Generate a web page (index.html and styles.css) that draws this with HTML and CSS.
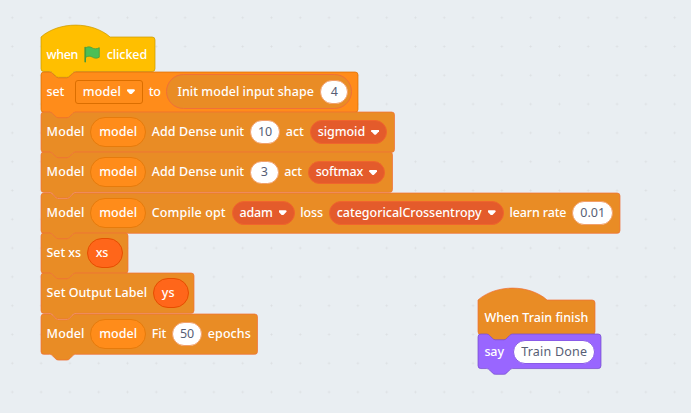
FILE: index.html
```html
<!DOCTYPE html>
<html lang="en">
<head>
<meta charset="utf-8">
<title>Blocks workspace</title>
<link rel="stylesheet" href="styles.css">
</head>
<body>
<main class="workspace">
  <section class="stack stack-main">
    <div class="block hat events" data-width="114">
      <span class="label" data-w="31.5">when</span>
      <svg class="flag" viewBox="0 0 17 17"><path d="M1.200 1.500V15.700" stroke="#45993d" stroke-width="1.600" stroke-linecap="round"/><path d="M1.600 1.800C4 .3 6.300 .7 8.300 1.900S12.600 3.100 15.300 1.700V11.200C12.600 12.800 10.300 12.300 8.300 11.100S4 9.800 1.600 11.400Z" fill="#4cbf56" stroke="#45993d" stroke-width=".7"/></svg>
      <span class="label" data-w="40.5">clicked</span>
    </div>
    <div class="block data" data-width="317">
      <span class="label set" data-w="17.500">set</span>
      <span class="menu square"><span class="label" data-w="38">model</span><i class="arrow"></i></span>
      <span class="label" data-w="12">to</span>
      <span class="reporter"><span class="label" data-w="136.500">Init model input shape</span><span class="value"><span class="label" data-w="7">4</span></span></span>
    </div>
    <div class="block learn" data-width="353.500">
      <span class="label" data-w="38">Model</span><span class="variable"><span class="label" data-w="38">model</span></span>
      <span class="label" data-w="92.500">Add Dense unit</span><span class="value"><span class="label" data-w="14">10</span></span>
      <span class="label" data-w="18">act</span><span class="menu"><span class="label" data-w="47.500">sigmoid</span><i class="arrow"></i></span>
    </div>
    <div class="block learn" data-width="351.500">
      <span class="label" data-w="38">Model</span><span class="variable"><span class="label" data-w="38">model</span></span>
      <span class="label" data-w="92.500">Add Dense unit</span><span class="value"><span class="label" data-w="7">3</span></span>
      <span class="label" data-w="17.500">act</span><span class="menu"><span class="label" data-w="47.500">softmax</span><i class="arrow"></i></span>
    </div>
    <div class="block learn" data-width="579">
      <span class="label" data-w="38">Model</span><span class="variable"><span class="label" data-w="38">model</span></span>
      <span class="label" data-w="74">Compile opt</span><span class="menu"><span class="label" data-w="33">adam</span><i class="arrow"></i></span>
      <span class="label" data-w="22.500">loss</span><span class="menu"><span class="label" data-w="145">categoricalCrossentropy</span><i class="arrow"></i></span>
      <span class="label" data-w="57">learn rate</span><span class="value"><span class="label" data-w="25">0.01</span></span>
    </div>
    <div class="block learn" data-width="87">
      <span class="label" data-w="34.500">Set xs</span><span class="variable list"><span class="label" data-w="12.500">xs</span></span>
    </div>
    <div class="block learn" data-width="153">
      <span class="label" data-w="100.500">Set Output Label</span><span class="variable list"><span class="label" data-w="13">ys</span></span>
    </div>
    <div class="block learn" data-width="216.500">
      <span class="label" data-w="38">Model</span><span class="variable"><span class="label" data-w="38">model</span></span>
      <span class="label" data-w="14.500">Fit</span><span class="value"><span class="label" data-w="14">50</span></span>
      <span class="label" data-w="43">epochs</span>
    </div>
  </section>
  <section class="stack stack-finish">
    <div class="block hat learn" data-width="117">
      <span class="label" data-w="104">When Train finish</span>
    </div>
    <div class="block looks" data-width="123">
      <span class="label say" data-w="19.500">say</span><span class="value"><span class="label" data-w="66">Train Done</span></span>
    </div>
  </section>
</main>
<script src="blocks.js"></script>
</body>
</html>
```
FILE: styles.css
```css
* { box-sizing: border-box; }
body {
  margin: 0;
  width: 691px;
  height: 413px;
  overflow: hidden;
  font: 500 12.5px/16px "Noto Sans", "Open Sans", sans-serif;
  color: #fff;
}
.workspace {
  position: relative;
  width: 691px;
  height: 413px;
  background-color: #e9eef2;
  background-image: radial-gradient(circle at center, #dcdfe2 0.7px, transparent 1.4px);
  background-size: 28.8px 28.8px;
  background-position: -2.1px 3.3px;
}
.stack { position: absolute; display: flex; flex-direction: column; }
.stack-main { left: 40.550px; top: 37.100px; }
.stack-finish { left: 478.4px; top: 299.700px; }
.block {
  position: relative;
  display: flex;
  align-items: center;
  gap: 5.800px;
  height: 40.340px;
  padding-left: 6px;
}
.block.hat { height: 34.560px; padding-top: 2px; }
.block.looks { height: 34.560px; padding-top: 1px; }
.shape { position: absolute; left: 0; top: 0; width: 1px; height: 1px; overflow: visible; }
.events .shape { fill: #ffbf00; stroke: #cc9900; }
.data .shape { fill: #ff8c1a; stroke: #db6e00; }
.learn .shape { fill: #e98c25; stroke: #f07038; }
.looks .shape { fill: #9966ff; stroke: #774dcb; }
.label { position: relative; flex: none; white-space: pre; }
.set { margin-right: 5px; }
.say { margin-right: 3.500px; }
.flag { position: relative; width: 17px; height: 17px; flex: none; fill: none; margin: -1px 0 0 0; }
.menu, .value, .variable, .reporter {
  position: relative;
  display: flex;
  flex: none;
  align-items: center;
  border: 1px solid #f0642c;
}
.menu { height: 23.500px; padding: 0 7px; gap: 6px; border-radius: 12px; background: #e45b2b; }
.menu.square { border-color: #db6e00; border-radius: 3px; background: #ff8c1a; }
.arrow { width: 8px; height: 5px; background: #fff; clip-path: polygon(0 10%, 12% 0, 88% 0, 100% 10%, 100% 30%, 58% 100%, 42% 100%, 0 30%); }
.value { justify-content: center; min-width: 28.500px; height: 23.500px; padding: 0 7px; border-color: #f2a06b; border-radius: 12px; background: #fff; color: #575e75; font-weight: 400; }
.looks .value { border-color: #8a5be8; }
.variable { height: 30px; padding: 0 7.800px; border-color: #e67b0c; border-radius: 15px; background: #ff8c1a; }
.variable.list { width: 36px; border-color: #e64d00; background: #ff661a; }
.reporter { height: 35px; padding: 0 3px 0 10px; gap: 6px; border-color: #f07038; border-radius: 18px; background: #e98c25; }
```
FILE: blocks.js
```js
const SCALE = 0.72;
const NOTCH = 'c2,0 3,1 4,2 l4,4 c1,1 2,2 4,2 h12 c2,0 3,-1 4,-2 l4,-4 c1,-1 2,-2 4,-2';
const NOTCH_BACK = 'c-2,0 -3,1 -4,2 l-4,4 c-1,1 -2,2 -4,2 h-12 c-2,0 -3,-1 -4,-2 l-4,-4 c-1,-1 -2,-2 -4,-2';

// Outline of a stackable block, with its connector notches.
document.querySelectorAll('.block').forEach((block) => {
  const width = Number(block.dataset.width) / SCALE;
  const hat = block.classList.contains('hat');
  const height = hat || block.classList.contains('looks') ? 48 : 56;
  block.style.width = block.dataset.width + 'px';
  const top = hat ? 'M0,0 c25,-22 71,-22 96,0' : 'M0,4 a4,4 0 0 1 4,-4 H12 ' + NOTCH;
  const outline = `${top} H${width - 4} a4,4 0 0 1 4,4 V${height - 4} a4,4 0 0 1 -4,4 H48 ${NOTCH_BACK} H4 a4,4 0 0 1 -4,-4 Z`;
  block.insertAdjacentHTML('afterbegin', `<svg class="shape"><path transform="scale(${SCALE})" d="${outline}"/></svg>`);
});

// Track each label to its measured width.
document.querySelectorAll('.label').forEach((label) => {
  const target = Number(label.dataset.w);
  const spacing = (target - label.getBoundingClientRect().width) / label.textContent.length;
  label.style.letterSpacing = spacing + 'px';
  label.style.width = target + 'px';
});
```
